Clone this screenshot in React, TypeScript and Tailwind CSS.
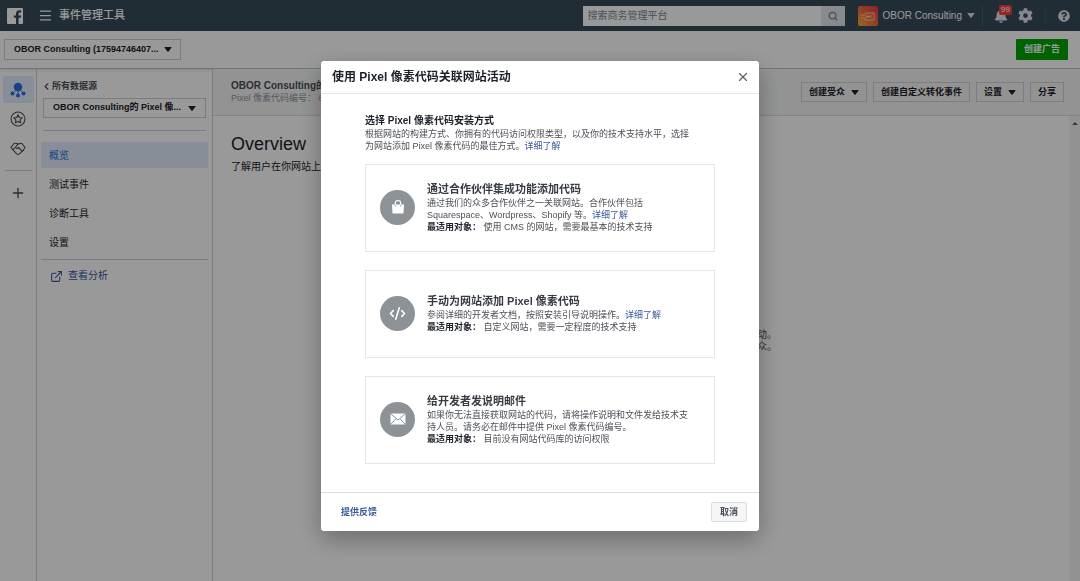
import React from 'react';
import { ChevronLeft, Code2, ExternalLink, Menu, Plus, Search, X } from 'lucide-react';
import { FaBell, FaCog, FaQuestionCircle } from 'react-icons/fa';

const navItems = ['概览', '测试事件', '诊断工具', '设置'];

const methods = [
  {
    id: 'partner',
    title: '通过合作伙伴集成功能添加代码',
    lines: ['通过我们的众多合作伙伴之一关联网站。合作伙伴包括', 'Squarespace、Wordpress、Shopify 等。'],
    link: true,
    best: '使用 CMS 的网站，需要最基本的技术支持',
    icon: <BagIcon />,
  },
  {
    id: 'manual',
    title: '手动为网站添加 Pixel 像素代码',
    lines: ['参阅详细的开发者文档，按照安装引导说明操作。'],
    link: true,
    best: '自定义网站，需要一定程度的技术支持',
    icon: <Code2 className="size-[17px]" strokeWidth={2.2} />,
  },
  {
    id: 'email',
    title: '给开发者发说明邮件',
    lines: ['如果你无法直接获取网站的代码，请将操作说明和文件发给技术支', '持人员。请务必在邮件中提供 Pixel 像素代码编号。'],
    link: false,
    best: '目前没有网站代码库的访问权限',
    icon: <MailIcon />,
  },
];

function BagIcon() {
  return (
    <svg viewBox="0 0 16 16" className="size-4" fill="none">
      <path d="M2 5.5h12l-.5 9h-11z" fill="currentColor" />
      <path d="M5.3 7V4.2a2.7 2.7 0 0 1 5.4 0V7" stroke="currentColor" strokeWidth="1.2" />
      <path d="M5.3 6v1.4M10.7 6v1.4" stroke="#8d9296" strokeWidth="1" />
    </svg>
  );
}

function MailIcon() {
  return (
    <svg viewBox="0 0 16 12" className="h-3 w-4">
      <rect x="0.5" y="0.5" width="15" height="11" rx="1" fill="currentColor" />
      <path d="M1 1l7 6 7-6M1 11l4.8-5M15 11l-4.8-5" fill="none" stroke="#8d9296" strokeWidth="1" />
    </svg>
  );
}

function Caret({ className = '' }: { className?: string }) {
  return (
    <svg viewBox="0 0 8 5" className={`h-[5px] w-2 shrink-0 ${className}`} fill="currentColor">
      <path d="M1 0h6q1 0 .4.8L4.6 4.6q-.6.7-1.2 0L.6.8Q0 0 1 0z" />
    </svg>
  );
}

function FacebookLogo() {
  return (
    <svg viewBox="0 0 16 16" className="size-4">
      <rect width="16" height="16" rx="1" fill="#fff" />
      <path
        d="M9 16V9.8H6.8V7.4H9V5.6c0-2.2 1.3-3.4 3.3-3.4.9 0 1.7.1 1.9.1v2.2h-1.3c-1.1 0-1.3.5-1.3 1.2v1.7h2.5l-.3 2.4h-2.2V16z"
        fill="#384b59"
      />
    </svg>
  );
}

function AccountLogo() {
  return (
    <svg viewBox="0 0 20 20" className="size-5">
      <defs>
        <linearGradient id="account" x1="0" y1="1" x2="1" y2="0">
          <stop offset="0" stopColor="#ffb03a" />
          <stop offset="0.5" stopColor="#f5693c" />
          <stop offset="1" stopColor="#e63950" />
        </linearGradient>
      </defs>
      <rect width="20" height="20" rx="2" fill="url(#account)" />
      <path d="M7 7h9v7H6M3 9h5M3 12h5M8 10.500h4M10 9v3M13 9v3" fill="none" stroke="#ffd9b8" strokeWidth="0.9" />
    </svg>
  );
}

function SourcesIcon() {
  return (
    <svg viewBox="0 0 16 16" className="size-4">
      <path d="M8 6L2.500 11.500M8 6l5.500 5.500M8 6v8" stroke="#2d6be4" strokeWidth="0.9" />
      <g fill="#2d6be4">
        <circle cx="8" cy="5" r="4.300" />
        <circle cx="2.500" cy="11.500" r="2" />
        <circle cx="13.500" cy="11.500" r="2" />
        <circle cx="8" cy="13.500" r="2" />
      </g>
    </svg>
  );
}

function StarIcon() {
  return (
    <svg viewBox="0 0 16 16" className="size-4" fill="none" stroke="currentColor" strokeLinejoin="round">
      <circle cx="8" cy="8" r="7" strokeWidth="1.1" />
      <path d="M8 3.800l1.300 2.700 2.900.4-2.100 2 .5 2.900L8 10.400l-2.600 1.400.5-2.900-2.100-2 2.900-.4z" strokeWidth="1.1" />
    </svg>
  );
}

function HandshakeIcon() {
  return (
    <svg viewBox="0 0 16 16" className="size-4" fill="none" stroke="currentColor" strokeWidth="1.1" strokeLinejoin="round" strokeLinecap="round">
      <path d="M1 6.500L4 2.500q2-.8 4 .7 2-1.500 4-.7l3 4-1.800 2.800" />
      <path d="M1 6.500L6.600 12.800q1.400 1.200 2.800 0L13.200 9.300" />
      <path d="M8 3.200L5.200 6.500q1.500 1.700 3.400 0l3.600 3.600M3 8.800l1.200-1.500" />
    </svg>
  );
}

function LearnMore() {
  return (
    <a href="#" className="text-[#385898]">
      详细了解
    </a>
  );
}

function ActionButton({ label, caret = false }: { label: string; caret?: boolean }) {
  return (
    <button type="button" className="flex h-5 shrink-0 items-center gap-[6px] border border-[#d0d3d8] px-[7px] pt-px text-[9px] font-bold">
      {label}
      {caret && <Caret />}
    </button>
  );
}

function TopBar() {
  return (
    <header className="flex h-[31px] items-center bg-[#384b59] text-white">
      <a href="#" aria-label="Facebook" className="pl-[7px]">
        <FacebookLogo />
      </a>
      <span className="ml-1 h-5 w-px bg-[#314250]" />
      <button type="button" aria-label="菜单" className="ml-[10px]">
        <Menu className="size-[15px]" strokeWidth={2} />
      </button>
      <h1 className="ml-[6px] text-[11px] font-medium">事件管理工具</h1>
      <div className="flex-1" />
      <form className="flex h-5 w-[262px] bg-white">
        <input
          type="text"
          aria-label="搜索商务管理平台"
          placeholder="搜索商务管理平台"
          className="min-w-0 flex-1 px-[5px] text-[10px] outline-none placeholder:text-[#7f858d]"
        />
        <button type="button" aria-label="搜索" className="flex w-6 items-center justify-center bg-[#e4e7eb] text-[#7f858d]">
          <Search className="size-[10px]" strokeWidth={3} />
        </button>
      </form>
      <button type="button" className="ml-[13px] flex items-center gap-[5px] text-[10px]">
        <AccountLogo />
        OBOR Consulting
        <Caret className="text-[#d5dae0]" />
      </button>
      <span className="ml-[7px] h-5 w-px bg-[#4a5c6a]" />
      <button type="button" aria-label="通知" className="relative ml-[11px] text-[#dfe3e8]">
        <FaBell className="size-[14px]" />
        <span className="absolute -top-1 left-[5px] rounded-[2px] bg-[#fa3e3e] px-[2px] text-[8px] leading-[10px] text-white">99</span>
      </button>
      <button type="button" aria-label="设置" className="ml-[10px] text-[#dfe3e8]">
        <FaCog className="size-[15px]" />
      </button>
      <span className="ml-3 h-5 w-px bg-[#435563]" />
      <button type="button" aria-label="帮助" className="mr-[10px] ml-3 text-[#dfe3e8]">
        <FaQuestionCircle className="size-3" />
      </button>
    </header>
  );
}

function IconRail() {
  return (
    <nav className="flex w-[37px] shrink-0 flex-col items-center border-r border-[#ccd0d5] pt-[7px] text-[#4b4f56]">
      <a href="#" aria-label="数据源" className="flex h-[27px] w-[31px] items-center justify-center rounded-[2px] bg-[#e1edfd]">
        <SourcesIcon />
      </a>
      <a href="#" aria-label="自定义转化" className="mt-2">
        <StarIcon />
      </a>
      <a href="#" aria-label="合作伙伴" className="mt-[14px]">
        <HandshakeIcon />
      </a>
      <span className="mt-[13px] h-px w-[27px] bg-[#ccd0d5]" />
      <button type="button" aria-label="添加" className="mt-[14px]">
        <Plus className="size-4" strokeWidth={2} />
      </button>
    </nav>
  );
}

function Sidebar() {
  return (
    <aside className="flex w-[176px] shrink-0 flex-col border-r border-[#ccd0d5] px-1">
      <a href="#" className="mt-[10px] flex items-center text-[9px] leading-[14px] font-bold text-[#4b4f56]">
        <ChevronLeft className="size-[11px]" strokeWidth={2.5} />
        所有数据源
      </a>
      <div className="relative mx-[2px] mt-[5px]">
        <select aria-label="数据源" className="block h-5 w-full appearance-none border border-[#ccd0d5] pr-5 pl-[9px] text-[9px] font-bold">
          <option>OBOR Consulting的 Pixel 像...</option>
        </select>
        <Caret className="pointer-events-none absolute top-2 right-[10px]" />
      </div>
      <hr className="mx-[2px] mt-3 border-[#ccd0d5]" />
      <ul className="mt-[11px] flex flex-col gap-[3px] text-[10px]">
        {navItems.map((item, idx) => (
          <li key={item}>
            <a href="#" className={`flex h-[26px] items-center px-2 pt-px ${idx === 0 ? 'bg-[#e1edfd] text-[#216fdb]' : ''}`}>
              {item}
            </a>
          </li>
        ))}
      </ul>
      <hr className="mt-1 border-[#ccd0d5]" />
      <a href="#" className="mt-2 flex items-center gap-[5px] px-[9px] text-[10px] leading-4 text-[#385898]">
        <ExternalLink className="size-[13px]" strokeWidth={2} />
        查看分析
      </a>
    </aside>
  );
}

function PixelPage() {
  return (
    <main className="flex min-w-0 flex-1 flex-col">
      <div className="flex h-[47px] items-center gap-[6px] border-b border-[#dadde1] bg-[#f5f6f7] pr-4 pl-[18px]">
        <div className="min-w-0 flex-1">
          <h2 className="truncate text-[10px] leading-3 font-bold text-[#4b4f56]">OBOR Consulting的</h2>
          <p className="truncate text-[9px] leading-3 text-[#8d949e]">Pixel 像素代码编号： 8</p>
        </div>
        <ActionButton label="创建受众" caret />
        <ActionButton label="创建自定义转化事件" />
        <ActionButton label="设置" caret />
        <ActionButton label="分享" />
      </div>
      <div className="flex flex-1">
        <section className="flex-1 pt-4 pl-[18px]">
          <h3 className="text-lg leading-6">Overview</h3>
          <p className="mt-[3px] text-[10px] leading-4">了解用户在你网站上</p>
          <p className="mt-[154px] mr-[292px] text-right text-[10px] leading-3 text-[#4b4f56]">
            动。
            <br />
            众。
          </p>
        </section>
        <div className="flex w-[11px] justify-center bg-[#f3f3f4] pt-[6px] text-[#606770]">
          <svg viewBox="0 0 6 3" className="h-[3px] w-[6px]" fill="currentColor">
            <path d="M0 3l3-3 3 3z" />
          </svg>
        </div>
      </div>
    </main>
  );
}

function InstallDialog() {
  return (
    <div role="dialog" aria-labelledby="dialog-title" className="mx-4 flex w-full max-w-[438px] flex-col rounded-[3px] bg-white shadow-[0_8px_24px_rgba(0,0,0,0.3)]">
      <div className="flex h-[33px] items-center justify-between border-b border-[#e5e6e9] pr-[9px] pl-[11px]">
        <h2 id="dialog-title" className="text-[12px] font-bold">
          使用 Pixel 像素代码关联网站活动
        </h2>
        <button type="button" aria-label="关闭" className="text-[#5a5f66]">
          <X className="size-[14px]" strokeWidth={2} />
        </button>
      </div>

      <div className="px-11 pt-5 pb-7 text-[9px] leading-3 text-[#4b4f56]">
        <h3 className="text-[10px] leading-[14px] font-bold text-[#1d2129]">选择 Pixel 像素代码安装方式</h3>
        <p>
          根据网站的构建方式、你拥有的代码访问权限类型，以及你的技术支持水平，选择
          <br />
          为网站添加 Pixel 像素代码的最佳方式。
          <LearnMore />
        </p>

        <div className="mt-3 flex flex-col gap-[18px]">
          {methods.map((method) => (
            <article key={method.id} className="flex h-[88px] items-center gap-3 border border-[#e5e6e9] px-[14px] pb-[2px]">
              <div className="flex size-[35px] shrink-0 items-center justify-center rounded-full bg-[#8d9296] text-white">{method.icon}</div>
              <div>
                <h4 className="text-[11px] leading-4 font-bold text-[#373b42]">{method.title}</h4>
                {method.lines.map((line, idx) => (
                  <p key={line}>
                    {line}
                    {method.link && idx === method.lines.length - 1 && <LearnMore />}
                  </p>
                ))}
                <p>
                  <b className="text-[#1d2129]">最适用对象：</b> {method.best}
                </p>
              </div>
            </article>
          ))}
        </div>
      </div>

      <div className="flex h-[39px] items-center justify-between border-t border-[#dadde1] pr-3 pl-5 text-[9px] font-bold">
        <a href="#" className="pt-px text-[#385898]">
          提供反馈
        </a>
        <button type="button" className="h-5 rounded-[2px] border border-[#dadde1] bg-[#f5f6f7] px-2 pt-px text-[#4b4f56]">
          取消
        </button>
      </div>
    </div>
  );
}

export default function App() {
  return (
    <div className="flex min-h-screen flex-col bg-white font-['Liberation_Sans','Noto_Sans_CJK_SC',sans-serif] text-[#1d2129]">
      <TopBar />
      <div className="flex h-[38px] items-center justify-between border-b border-[#bec3c9] pr-3 pl-1 shadow-sm">
        <div className="relative">
          <select aria-label="广告账户" className="block h-[21px] w-[177px] appearance-none border border-[#ccd0d5] pr-5 pl-[9px] text-[9px] font-bold">
            <option>OBOR Consulting (17594746407...</option>
          </select>
          <Caret className="pointer-events-none absolute top-2 right-[9px]" />
        </div>
        <button type="button" className="h-[21px] rounded-[1px] bg-[#00a400] px-2 pt-px text-[9px] font-bold text-white">
          创建广告
        </button>
      </div>
      <div className="flex flex-1">
        <IconRail />
        <Sidebar />
        <PixelPage />
      </div>
      <div className="fixed inset-0 flex items-start justify-center bg-black/40 pt-[61px]">
        <InstallDialog />
      </div>
    </div>
  );
}
